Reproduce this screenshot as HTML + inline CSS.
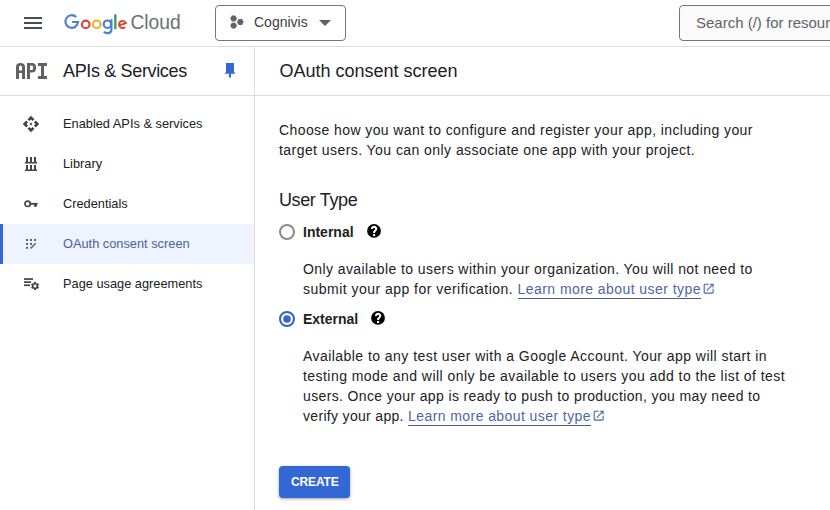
<!DOCTYPE html>
<html><head><meta charset="utf-8">
<style>
*{box-sizing:border-box;margin:0;padding:0}
html,body{width:830px;height:510px;overflow:hidden;background:#fff;font-family:"Liberation Sans",sans-serif;color:#202124}
.abs{position:absolute;white-space:nowrap}
svg{position:absolute;overflow:visible}
.ln{position:absolute;background:#dadce0}
.nav{position:absolute;left:63px;font-size:12.8px;line-height:16px;white-space:nowrap;color:#202124}
.body{position:absolute;font-size:14px;line-height:20px;letter-spacing:0.41px;white-space:nowrap;color:#202124}
.lnk{color:#4d66a8;text-decoration:none;border-bottom:1px solid #4d5f88;padding-bottom:1px}
.ext{display:inline-block;width:11px;height:11px;margin-left:2px;vertical-align:-1px}
.h18{position:absolute;font-size:18px;line-height:20px;white-space:nowrap;color:#202124}
.bold{position:absolute;font-size:14px;line-height:16px;font-weight:bold;white-space:nowrap;color:#202124}
</style></head><body>
<!-- header -->
<svg style="left:24px;top:17px" width="18" height="12" viewBox="0 0 18 12"><rect x="0" y="0" width="18" height="2" fill="#4a4d50"/><rect x="0" y="5" width="18" height="2" fill="#4a4d50"/><rect x="0" y="10" width="18" height="2" fill="#4a4d50"/></svg>
<svg style="left:0;top:0" width="140" height="40" viewBox="0 0 140 40"><g fill="none" stroke-width="2.2">
<path d="M76.2 17.1A6.3 6.3 0 1 0 78 22H72.2" stroke="#4a7fd6"/>
<circle cx="85.75" cy="24.4" r="3.8" stroke="#d9483b"/>
<circle cx="96.8" cy="24.4" r="3.8" stroke="#e8b530"/>
<circle cx="107.4" cy="24.2" r="3.7" stroke="#4a7fd6"/>
<path d="M111.4 19.2V29.6Q111.4 33.2 107.4 33.2Q105 33.2 103.9 31.6" stroke="#4a7fd6"/>
<path d="M118.9 25.4L125.9 23.1A3.6 3.6 0 1 0 125.1 27.1" stroke="#d9483b" stroke-width="2"/>
</g><rect x="114.2" y="14.3" width="2.3" height="14.8" fill="#3a9b52"/></svg>
<div class="abs" style="left:130.5px;top:12px;font-size:19.3px;line-height:22px;letter-spacing:-0.05px;color:#6b6f73">Cloud</div>
<div class="abs" style="left:215px;top:5px;width:131px;height:36px;border:1px solid #747775;border-radius:4px"></div>
<svg style="left:230px;top:15px" width="14" height="14" viewBox="0 0 14 14"><path d="M7.00 3.50L5.30 6.44L1.90 6.44L0.20 3.50L1.90 0.56L5.30 0.56Z" fill="#5f6368"/><path d="M13.70 7.00L12.00 9.94L8.60 9.94L6.90 7.00L8.60 4.06L12.00 4.06Z" fill="#5f6368"/><path d="M7.00 10.60L5.30 13.54L1.90 13.54L0.20 10.60L1.90 7.66L5.30 7.66Z" fill="#5f6368"/></svg>
<div class="abs" style="left:254px;top:14px;font-size:14px;line-height:16px;color:#3c4043">Cognivis</div>
<svg style="left:319px;top:20px" width="12" height="6" viewBox="0 0 12 6"><path d="M0 0H12L6 6Z" fill="#5f6368"/></svg>
<div class="abs" style="left:679px;top:5px;width:170px;height:36px;border:1px solid #747775;border-radius:4px;background:#fafafa"></div>
<div class="abs" style="left:696px;top:14px;font-size:15px;line-height:17px;color:#5f6368">Search (/) for resources</div>
<div class="ln" style="left:0;top:46px;width:830px;height:1px"></div>
<div class="ln" style="left:0;top:95px;width:830px;height:1px"></div>
<div class="ln" style="left:254px;top:46px;width:1px;height:464px"></div>

<!-- sub header -->
<svg style="left:15px;top:62px" width="32" height="17" viewBox="0 0 32 17">
 <g fill="#616161">
 <path d="M1 17V5Q1 1 5.5 1Q10 1 10 5V17H7V11H4V17ZM4 8.5H7V5Q7 3.5 5.5 3.5Q4 3.5 4 5Z"/>
 <path d="M12 17V1H17Q21 1 21 5V6Q21 10.5 17 10.5H15V17ZM15 8H17Q18 8 18 6.5V5Q18 3.5 17 3.5H15Z"/>
 <path d="M23 1H32V4H29V14H32V17H23V14H26V4H23Z"/>
 </g></svg>
<div class="h18" style="left:63px;top:61px;letter-spacing:-0.35px">APIs &amp; Services</div>
<svg style="left:224px;top:63px" width="12" height="15" viewBox="0 0 12 15"><path d="M2 0H10V9L11.5 10.8H0.5L2 9Z" fill="#3367d6"/><rect x="5" y="10.5" width="2" height="4" fill="#3367d6"/></svg>
<div class="h18" style="left:279.5px;top:61px">OAuth consent screen</div>

<!-- nav -->
<svg style="left:22px;top:115px" width="18" height="18" viewBox="0 0 24 24"><path fill="#444" d="M14 12l-2 2-2-2 2-2 2 2zm-2-6l2.12 2.12 2.5-2.5L12 1 7.38 5.62l2.5 2.5L12 6zm-6 6l2.12-2.12-2.5-2.5L1 12l4.62 4.62 2.5-2.5L6 12zm12 0l-2.12 2.12 2.5 2.5L23 12l-4.62-4.62-2.5 2.5L18 12zm-6 6l-2.12-2.12-2.5 2.5L12 23l4.62-4.62-2.5-2.5L12 18z"/></svg>
<div class="nav" style="top:116px">Enabled APIs &amp; services</div>

<svg style="left:25px;top:157px" width="12" height="14" viewBox="0 0 12 14"><g fill="#444"><rect x="1" y="0" width="2" height="5.5"/><rect x="5" y="0" width="2" height="5.5"/><rect x="9" y="0" width="2" height="5.5"/><rect x="0" y="5" width="12" height="1.5"/><rect x="1" y="8" width="2" height="5"/><rect x="5" y="8" width="2" height="5"/><rect x="9" y="8" width="2" height="5"/><rect x="0" y="12.5" width="12" height="1.5"/></g></svg>
<div class="nav" style="top:156px">Library</div>

<svg style="left:23px;top:199px" width="16" height="9" viewBox="0 0 16 9"><circle cx="4.6" cy="4.8" r="2.7" fill="none" stroke="#444" stroke-width="1.7"/><rect x="7" y="3.9" width="7.6" height="1.8" fill="#444"/><rect x="11.1" y="4.5" width="2.7" height="3.3" fill="#444"/></svg>
<div class="nav" style="top:196px">Credentials</div>

<div class="abs" style="left:0;top:224px;width:254px;height:40px;background:#eef3fd"></div>
<div class="abs" style="left:0;top:224px;width:3px;height:40px;background:#3367d6"></div>
<svg style="left:25px;top:238px" width="12" height="12" viewBox="0 0 12 12"><g fill="#334466"><rect x="1.2" y="1.1" width="1.8" height="1.8"/><rect x="5.1" y="1.1" width="1.8" height="1.8"/><rect x="9.1" y="1.1" width="1.8" height="1.8"/><rect x="1.2" y="5" width="1.8" height="1.8"/><rect x="5.1" y="5" width="1.8" height="1.8"/><rect x="1.2" y="8.9" width="1.8" height="1.8"/></g><path d="M5.6 10.4L10.7 5.3" stroke="#4a64ac" stroke-width="1.5"/></svg>
<div class="nav" style="top:236px;color:#4a62a2">OAuth consent screen</div>

<svg style="left:23px;top:277px" width="17" height="14" viewBox="0 0 17 14"><g fill="#444"><rect x="1" y="1.2" width="9" height="1.7"/><rect x="1" y="4.3" width="7" height="1.7"/><rect x="1" y="7.4" width="6" height="1.7"/></g>
 </svg><svg style="left:29.96px;top:280.86px" width="10.08" height="10.08" viewBox="0 0 24 24"><path fill="#444" fill-rule="evenodd" d="M19.14 12.94c.04-.3.06-.61.06-.94 0-.32-.02-.64-.07-.94l2.03-1.58c.18-.14.23-.41.12-.61l-1.92-3.32c-.12-.22-.37-.29-.59-.22l-2.390.96c-.5-.38-1.030-.7-1.62-.94l-.36-2.54c-.04-.24-.24-.41-.48-.41h-3.84c-.24 0-.43.17-.47.41l-.36 2.54c-.59.24-1.13.57-1.62.94l-2.39-.96c-.22-.08-.47 0-.59.22L2.74 8.87c-.12.21-.08.47.12.61l2.03 1.58c-.05.3-.09.63-.09.94s.02.64.07.94l-2.03 1.58c-.18.14-.23.41-.12.61l1.92 3.32c.12.22.37.29.59.22l2.39-.96c.5.38 1.03.7 1.62.94l.36 2.54c.05.24.24.41.48.41h3.84c.24 0 .44-.17.47-.41l.36-2.54c.59-.24 1.13-.56 1.62-.94l2.39.96c.22.08.47 0 .59-.22l1.92-3.32c.12-.22.07-.47-.12-.61l-2.01-1.58zM12 15.6c-1.98 0-3.6-1.62-3.6-3.6s1.62-3.6 3.6-3.6 3.6 1.62 3.6 3.6-1.62 3.6-3.6 3.6z"/></svg>
<div class="nav" style="top:276px">Page usage agreements</div>

<!-- content -->
<div class="body" style="left:279px;top:120px;letter-spacing:0.41px">Choose how you want to configure and register your app, including your</div>
<div class="body" style="left:279px;top:140px;letter-spacing:0.44px">target users. You can only associate one app with your project.</div>
<div class="h18" style="left:279px;top:190px;letter-spacing:-0.38px">User Type</div>

<svg style="left:279px;top:224px" width="16" height="16" viewBox="0 0 16 16"><circle cx="8" cy="8" r="7" fill="none" stroke="#8a8a8a" stroke-width="2"/></svg>
<div class="bold" style="left:303px;top:224px">Internal</div>
<svg style="left:367px;top:223.8px" width="14" height="14" viewBox="0 0 14 14"><circle cx="7" cy="6.9" r="6.9" fill="#000"/><path d="M4.9 5A2.2 2.2 0 1 1 9.3 5C9.3 6.4 7.1 6.6 7.1 8.4V8.9" fill="none" stroke="#fff" stroke-width="2"/><rect x="6.05" y="10" width="2.1" height="2.1" fill="#fff"/></svg>
<div class="body" style="left:303px;top:259px;letter-spacing:0.41px">Only available to users within your organization. You will not need to</div>
<div class="body" style="left:303px;top:279px"><span style="letter-spacing:0.475px">submit your app for verification. </span><span class="lnk" style="letter-spacing:0.434px">Learn more about user type</span></div>
<svg style="left:702.4px;top:282.4px" width="13.3" height="13.3" viewBox="0 0 24 24"><path fill="#4d66a8" d="M19 19H5V5h7V3H5c-1.11 0-2 .9-2 2v14c0 1.1.89 2 2 2h14c1.1 0 2-.9 2-2v-7h-2v7zM14 3v2h3.59l-9.830 9.830 1.41 1.41L19 6.41V10h2V3h-7z"/></svg>

<svg style="left:279px;top:311px" width="16" height="16" viewBox="0 0 16 16"><circle cx="8" cy="8" r="7" fill="none" stroke="#3262c4" stroke-width="2"/><circle cx="8" cy="8" r="3.8" fill="#3367d6"/></svg>
<div class="bold" style="left:303px;top:311px">External</div>
<svg style="left:370.9px;top:310.8px" width="14" height="14" viewBox="0 0 14 14"><circle cx="7" cy="6.9" r="6.9" fill="#000"/><path d="M4.9 5A2.2 2.2 0 1 1 9.3 5C9.3 6.4 7.1 6.6 7.1 8.4V8.9" fill="none" stroke="#fff" stroke-width="2"/><rect x="6.05" y="10" width="2.1" height="2.1" fill="#fff"/></svg>
<div class="body" style="left:303px;top:346px;letter-spacing:0.45px">Available to any test user with a Google Account. Your app will start in</div>
<div class="body" style="left:303px;top:366px;letter-spacing:0.445px">testing mode and will only be available to users you add to the list of test</div>
<div class="body" style="left:303px;top:386px;letter-spacing:0.365px">users. Once your app is ready to push to production, you may need to</div>
<div class="body" style="left:303px;top:406px"><span style="letter-spacing:0.32px">verify your app. </span><span class="lnk" style="letter-spacing:0.42px">Learn more about user type</span></div>
<svg style="left:592.3px;top:409.4px" width="13.3" height="13.3" viewBox="0 0 24 24"><path fill="#4d66a8" d="M19 19H5V5h7V3H5c-1.11 0-2 .9-2 2v14c0 1.1.89 2 2 2h14c1.1 0 2-.9 2-2v-7h-2v7zM14 3v2h3.59l-9.830 9.830 1.41 1.41L19 6.41V10h2V3h-7z"/></svg>

<div class="abs" style="left:279px;top:466px;width:71px;height:32px;background:#3367d6;border-radius:4px;box-shadow:0 1px 2px rgba(60,64,67,.3),0 1px 3px 1px rgba(60,64,67,.15)"></div>
<div class="abs" style="left:291px;top:475px;font-size:12px;line-height:14px;font-weight:bold;color:#fff;letter-spacing:-0.15px">CREATE</div>
</body></html>
